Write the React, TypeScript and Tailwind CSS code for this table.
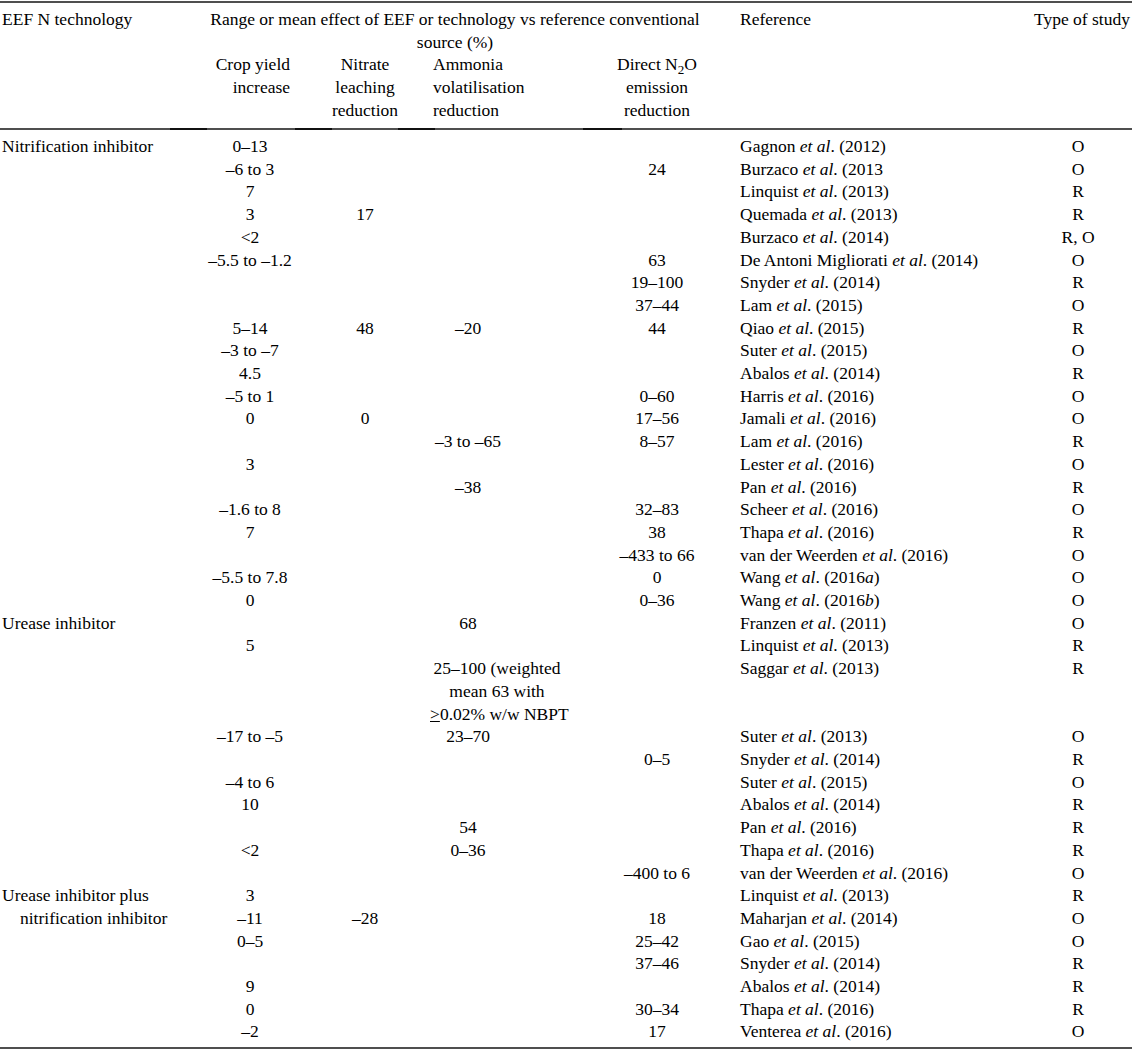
import type { ReactNode } from 'react'

type Row = {
  label?: string
  indent?: boolean
  crop?: string
  nit?: string
  amm?: ReactNode
  ammWide?: boolean
  n2o?: string
  ref: ReactNode
  type: string
}

const ref = (name: string, year: ReactNode) => (
  <>
    {name} <i>et al</i>. {year}
  </>
)

const nitrification: Row[] = [
  { label: 'Nitrification inhibitor', crop: '0–13', ref: ref('Gagnon', '(2012)'), type: 'O' },
  { crop: '–6 to 3', n2o: '24', ref: ref('Burzaco', '(2013'), type: 'O' },
  { crop: '7', ref: ref('Linquist', '(2013)'), type: 'R' },
  { crop: '3', nit: '17', ref: ref('Quemada', '(2013)'), type: 'R' },
  { crop: '<2', ref: ref('Burzaco', '(2014)'), type: 'R, O' },
  { crop: '–5.5 to –1.2', n2o: '63', ref: ref('De Antoni Migliorati', '(2014)'), type: 'O' },
  { n2o: '19–100', ref: ref('Snyder', '(2014)'), type: 'R' },
  { n2o: '37–44', ref: ref('Lam', '(2015)'), type: 'O' },
  { crop: '5–14', nit: '48', amm: '–20', n2o: '44', ref: ref('Qiao', '(2015)'), type: 'R' },
  { crop: '–3 to –7', ref: ref('Suter', '(2015)'), type: 'O' },
  { crop: '4.5', ref: ref('Abalos', '(2014)'), type: 'R' },
  { crop: '–5 to 1', n2o: '0–60', ref: ref('Harris', '(2016)'), type: 'O' },
  { crop: '0', nit: '0', n2o: '17–56', ref: ref('Jamali', '(2016)'), type: 'O' },
  { amm: '–3 to –65', n2o: '8–57', ref: ref('Lam', '(2016)'), type: 'R' },
  { crop: '3', ref: ref('Lester', '(2016)'), type: 'O' },
  { amm: '–38', ref: ref('Pan', '(2016)'), type: 'R' },
  { crop: '–1.6 to 8', n2o: '32–83', ref: ref('Scheer', '(2016)'), type: 'O' },
  { crop: '7', n2o: '38', ref: ref('Thapa', '(2016)'), type: 'R' },
  { n2o: '–433 to 66', ref: ref('van der Weerden', '(2016)'), type: 'O' },
  { crop: '–5.5 to 7.8', n2o: '0', ref: ref('Wang', <>(2016<i>a</i>)</>), type: 'O' },
  { crop: '0', n2o: '0–36', ref: ref('Wang', <>(2016<i>b</i>)</>), type: 'O' },
]

const urease: Row[] = [
  { label: 'Urease inhibitor', amm: '68', ref: ref('Franzen', '(2011)'), type: 'O' },
  { crop: '5', ref: ref('Linquist', '(2013)'), type: 'R' },
  {
    amm: (
      <>
        25–100 (weighted
        <br />
        mean 63 with
        <br />
        <span className="underline">&gt;</span>0.02% w/w NBPT
      </>
    ),
    ammWide: true,
    ref: ref('Saggar', '(2013)'),
    type: 'R',
  },
  { crop: '–17 to –5', amm: '23–70', ref: ref('Suter', '(2013)'), type: 'O' },
  { n2o: '0–5', ref: ref('Snyder', '(2014)'), type: 'R' },
  { crop: '–4 to 6', ref: ref('Suter', '(2015)'), type: 'O' },
  { crop: '10', ref: ref('Abalos', '(2014)'), type: 'R' },
  { amm: '54', ref: ref('Pan', '(2016)'), type: 'R' },
  { crop: '<2', amm: '0–36', ref: ref('Thapa', '(2016)'), type: 'R' },
  { n2o: '–400 to 6', ref: ref('van der Weerden', '(2016)'), type: 'O' },
]

const combined: Row[] = [
  { label: 'Urease inhibitor plus', crop: '3', ref: ref('Linquist', '(2013)'), type: 'R' },
  { label: 'nitrification inhibitor', indent: true, crop: '–11', nit: '–28', n2o: '18', ref: ref('Maharjan', '(2014)'), type: 'O' },
  { crop: '0–5', n2o: '25–42', ref: ref('Gao', '(2015)'), type: 'O' },
  { n2o: '37–46', ref: ref('Snyder', '(2014)'), type: 'R' },
  { crop: '9', ref: ref('Abalos', '(2014)'), type: 'R' },
  { crop: '0', n2o: '30–34', ref: ref('Thapa', '(2016)'), type: 'R' },
  { crop: '–2', n2o: '17', ref: ref('Venterea', '(2016)'), type: 'O' },
]

const rows = [...nitrification, ...urease, ...combined]

const grid = 'grid grid-cols-[200px_100px_130px_76px_68px_166px_290px_102px]'

function DataRow({ row }: { row: Row }) {
  return (
    <div className={grid}>
      <div className={`col-start-1 whitespace-nowrap ${row.indent ? 'pl-[20px]' : 'pl-[2px]'}`}>
        {row.label}
      </div>
      <div className="col-start-2 text-center whitespace-nowrap">{row.crop}</div>
      <div className="col-start-3 text-center whitespace-nowrap">{row.nit}</div>
      {row.ammWide ? (
        <div className="col-start-4 col-span-2 text-center whitespace-nowrap pr-[10px]">{row.amm}</div>
      ) : (
        <div className="col-start-4 text-center whitespace-nowrap">{row.amm}</div>
      )}
      <div className="col-start-6 text-center whitespace-nowrap">{row.n2o}</div>
      <div className="col-start-7 whitespace-nowrap">{row.ref}</div>
      <div className="col-start-8 text-center whitespace-nowrap pr-[6px]">{row.type}</div>
    </div>
  )
}

function Rule() {
  return <div className="h-[2px] w-full bg-[#4f4f4f]" />
}

export default function App() {
  return (
    <div
      className="w-[1132px] bg-white text-black text-[17.5px] leading-[22.7px]"
      style={{ fontFamily: '"Liberation Serif", "Times New Roman", serif' }}
    >
      <div className="pt-[1px]">
        <Rule />
      </div>

      {/* header */}
      <div className="pt-[5px] pb-[6px]">
        <div className={grid}>
          <div className="col-start-1 pl-[2px] whitespace-nowrap">EEF N technology</div>
          <div className="col-start-2 col-span-5 text-center pr-[30px] whitespace-nowrap">
            Range or mean effect of EEF or technology vs reference conventional
            <br />
            source (%)
          </div>
          <div className="col-start-7 col-span-2 flex justify-between pr-[2px]">
            <span>Reference</span>
            <span>Type of study</span>
          </div>
        </div>
        <div className={grid}>
          <div className="col-start-2 text-right pr-[10px] whitespace-nowrap">
            Crop yield
            <br />
            increase
          </div>
          <div className="col-start-3 text-center whitespace-nowrap">
            Nitrate
            <br />
            leaching
            <br />
            reduction
          </div>
          <div className="col-start-4 col-span-2 pl-[3px] whitespace-nowrap">
            Ammonia
            <br />
            volatilisation
            <br />
            reduction
          </div>
          <div className="col-start-6 text-center whitespace-nowrap">
            Direct N<sub>2</sub>O
            <br />
            emission
            <br />
            reduction
          </div>
        </div>
      </div>

      <div className="flex h-[2px] w-full">
        <div className="w-[170px] bg-[#4f4f4f]" />
        <div className="w-[37px] bg-[#111]" />
        <div className="w-[88px] bg-[#4f4f4f]" />
        <div className="w-[37px] bg-[#111]" />
        <div className="w-[66px] bg-[#4f4f4f]" />
        <div className="w-[37px] bg-[#111]" />
        <div className="w-[148px] bg-[#4f4f4f]" />
        <div className="w-[39px] bg-[#111]" />
        <div className="flex-1 bg-[#4f4f4f]" />
      </div>

      <div className="pt-[5.5px] pb-[4px]">
        {rows.map((row, i) => (
          <DataRow key={i} row={row} />
        ))}
      </div>

      <Rule />
    </div>
  )
}
